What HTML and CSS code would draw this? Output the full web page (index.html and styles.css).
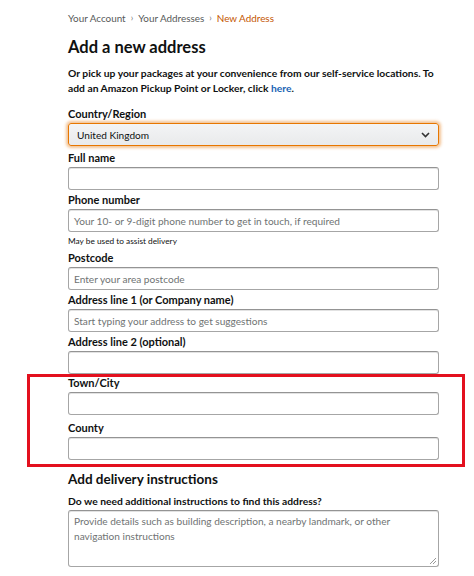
FILE: index.html
```html
<!DOCTYPE html>
<html lang="en">
<head>
<meta charset="utf-8">
<title>Add a new address</title>
<link rel="stylesheet" href="styles.css">
</head>
<body>
<main class="page">
  <nav class="crumbs">
    <span>Your Account</span><span class="sep">›</span><span>Your Addresses</span><span class="sep">›</span><span class="current">New Address</span>
  </nav>
  <h1 class="title">Add a new address</h1>
  <p class="intro">Or pick up your packages at your convenience from our self-service locations. To add an Amazon Pickup Point or Locker, click <a class="link" href="#">here</a>.</p>

  <div class="field first">
    <label class="label">Country/Region</label>
    <div class="select">
      <span>United Kingdom</span>
      <svg class="chev" width="9" height="6" viewBox="0 0 9 6"><path d="M1 1l3.5 3.5L8 1" fill="none" stroke="#333" stroke-width="1.6"/></svg>
    </div>
  </div>

  <div class="field after-select">
    <label class="label">Full name</label>
    <div class="input"></div>
  </div>

  <div class="field">
    <label class="label">Phone number</label>
    <div class="input"><span class="ph">Your 10- or 9-digit phone number to get in touch, if required</span></div>
    <div class="hint">May be used to assist delivery</div>
  </div>

  <div class="field after-hint">
    <label class="label">Postcode</label>
    <div class="input"><span class="ph">Enter your area postcode</span></div>
  </div>

  <div class="field">
    <label class="label">Address line 1 (or Company name)</label>
    <div class="input"><span class="ph">Start typing your address to get suggestions</span></div>
  </div>

  <div class="field">
    <label class="label">Address line 2 (optional)</label>
    <div class="input"></div>
  </div>

  <div class="highlight">
    <span class="hl-box"></span>
    <div class="field">
      <label class="label">Town/City</label>
      <div class="input"></div>
    </div>
    <div class="field county">
      <label class="label">County</label>
      <div class="input"></div>
    </div>
  </div>

  <h2 class="subtitle">Add delivery instructions</h2>
  <div class="small-label">Do we need additional instructions to find this address?</div>
  <div class="textarea">
    <span class="ph">Provide details such as building description, a nearby landmark, or other navigation instructions</span>
    <svg class="grip" width="8" height="8" viewBox="0 0 8 8"><path d="M7 1L1 7M7 4L4 7" stroke="#999" stroke-width="1"/></svg>
  </div>
</main>
</body>
</html>
```
FILE: styles.css
```css
* { box-sizing: border-box; }
html, body { margin: 0; padding: 0; background: #fff; }
body {
  font-family: "Lato", "Open Sans", "Liberation Sans", sans-serif;
  color: #0f1111;
}
.page {
  width: 474px;
  padding: 11px 0 0 68px;
  display: flex;
  flex-direction: column;
}
.crumbs {
  font-size: 9.9px;
  line-height: 14px;
  color: #565959;
  display: flex;
  align-items: center;
}
.crumbs .sep { margin: 0 5px; font-size: 9px; color: #767676; }
.crumbs .current { color: #c45500; }
.title {
  margin: 11px 0 0;
  font-size: 16.5px;
  line-height: 22px;
  font-weight: 700;
}
.intro {
  margin: 8px 0 0;
  width: 380px;
  font-size: 10.3px;
  line-height: 15px;
  font-weight: 700;
}
.link { color: #1a64b4; text-decoration: none; }
.field {
  display: flex;
  flex-direction: column;
  width: 371px;
  margin-top: 3px;
}
.field.first { margin-top: 11px; }
.field.after-select { margin-top: 5px; }
.field.after-hint { margin-top: 4px; }
.label {
  font-size: 11px;
  line-height: 14px;
  font-weight: 700;
  margin-bottom: 2px;
}
.input {
  height: 23px;
  border: 1px solid #a6a6a6;
  border-top-color: #949494;
  border-radius: 3px;
  box-shadow: 0 1px 0 rgba(255,255,255,.5), inset 0 1px 0 rgba(15,17,17,.12);
  display: flex;
  align-items: center;
  padding: 0 5px;
}
.ph {
  font-size: 10.1px;
  color: #6f7373;
}
.select {
  height: 23px;
  border: 1px solid #e77600;
  border-radius: 3px;
  background: linear-gradient(#f3f4f5, #e9eaec);
  box-shadow: 0 0 3px 2px rgba(228,121,17,.45);
  display: flex;
  align-items: center;
  justify-content: space-between;
  padding: 0 6px 0 8px;
  font-size: 10.1px;
  color: #0f1111;
}
.chev { margin-right: 2px; }
.hint {
  font-size: 8.3px;
  line-height: 11px;
  color: #0f1111;
  margin-top: 4px;
}
.highlight {
  position: relative;
  margin-top: -1px;
}
.hl-box {
  position: absolute;
  left: -41px;
  top: 1px;
  width: 438px;
  height: 93px;
  border: 3px solid #e3101e;
  pointer-events: none;
}
.field.county { margin-top: 6px; }
.subtitle {
  margin: 10px 0 0;
  font-size: 13.5px;
  line-height: 18px;
  font-weight: 700;
}
.small-label {
  margin-top: 7px;
  font-size: 10.3px;
  line-height: 13px;
  font-weight: 700;
}
.textarea {
  position: relative;
  margin-top: 2px;
  width: 371px;
  height: 57px;
  border: 1px solid #a6a6a6;
  border-top-color: #949494;
  border-radius: 3px;
  box-shadow: inset 0 1px 0 rgba(15,17,17,.12);
  padding: 3px 5px;
  line-height: 15px;
}
.textarea .ph { display: block; width: 350px; }
.grip { position: absolute; right: 1px; bottom: 1px; }
```
